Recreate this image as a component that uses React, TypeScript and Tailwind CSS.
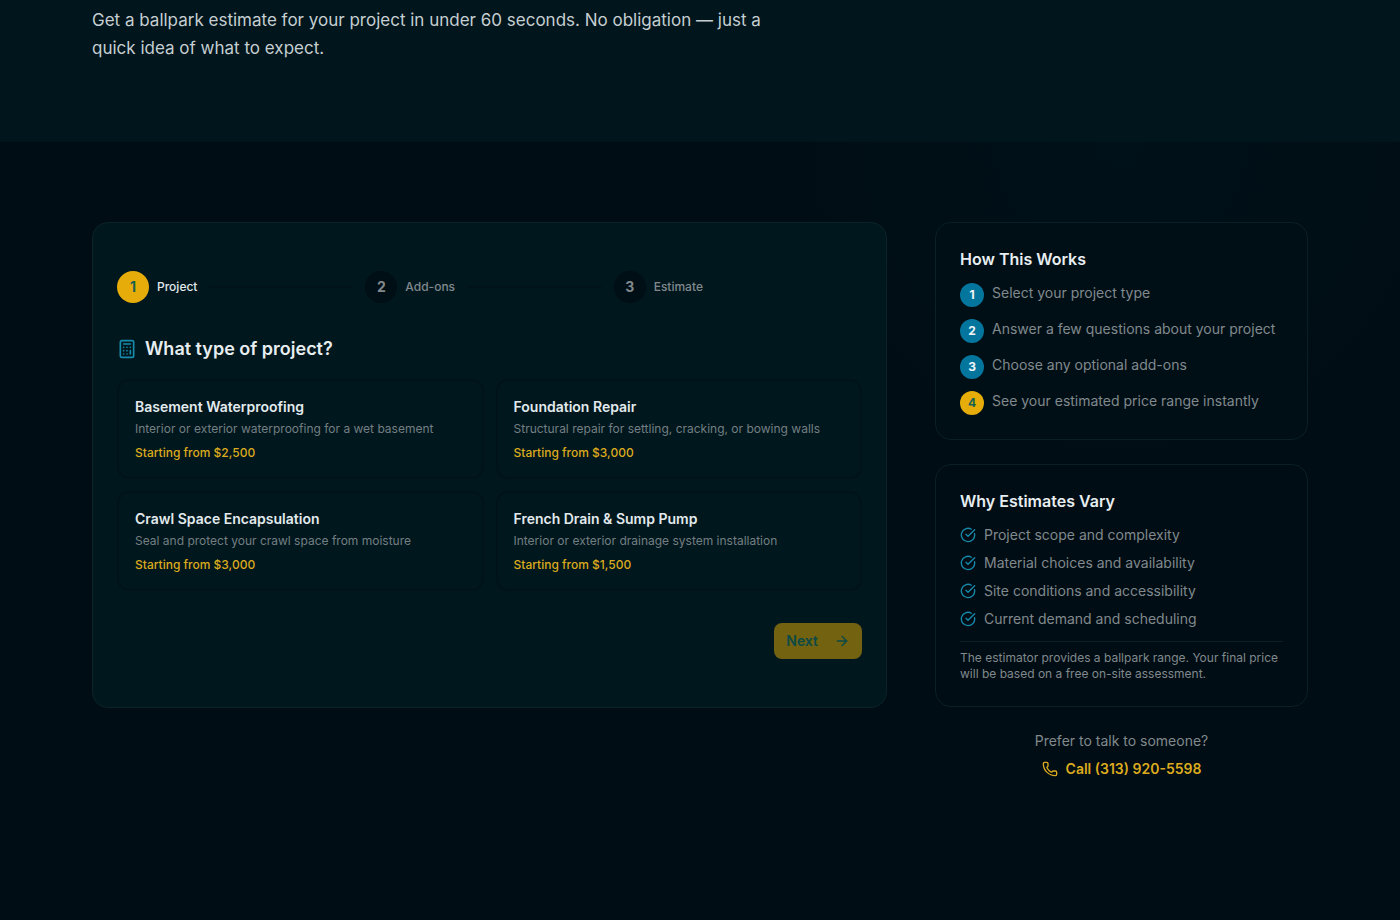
import { useState } from 'react';
import { ArrowRight, Calculator, CircleCheckBig, Phone } from 'lucide-react';
import clsx from 'clsx';

interface ProjectType {
  id: string;
  title: string;
  description: string;
  price: string;
}

const STEPS = ['Project', 'Add-ons', 'Estimate'];

const PROJECT_TYPES: ProjectType[] = [
  {
    id: 'basement',
    title: 'Basement Waterproofing',
    description: 'Interior or exterior waterproofing for a wet basement',
    price: '$2,500',
  },
  {
    id: 'foundation',
    title: 'Foundation Repair',
    description: 'Structural repair for settling, cracking, or bowing walls',
    price: '$3,000',
  },
  {
    id: 'crawl-space',
    title: 'Crawl Space Encapsulation',
    description: 'Seal and protect your crawl space from moisture',
    price: '$3,000',
  },
  {
    id: 'drainage',
    title: 'French Drain & Sump Pump',
    description: 'Interior or exterior drainage system installation',
    price: '$1,500',
  },
];

const HOW_IT_WORKS = [
  'Select your project type',
  'Answer a few questions about your project',
  'Choose any optional add-ons',
  'See your estimated price range instantly',
];

const VARIATIONS = [
  'Project scope and complexity',
  'Material choices and availability',
  'Site conditions and accessibility',
  'Current demand and scheduling',
];

function StepIndicator({ current }: { current: number }) {
  return (
    <ol className="flex items-center">
      {STEPS.map((label, index) => (
        <li key={label} className="flex flex-1 items-center">
          <span
            className={clsx(
              'flex h-8 w-8 shrink-0 items-center justify-center rounded-full text-sm font-bold',
              index === current ? 'bg-[#e5ac0a] text-[#17604e]' : 'bg-[#000e15] text-[#81898d]'
            )}
          >
            {index + 1}
          </span>
          <span
            className={clsx(
              'ml-2 text-xs font-medium',
              index === current ? 'text-[#e3eaed]' : 'text-[#81898d]'
            )}
          >
            {label}
          </span>
          {index < STEPS.length - 1 && <span className="mx-3 h-0.5 flex-1 bg-[#00131a]" />}
        </li>
      ))}
    </ol>
  );
}

function Estimator() {
  const [selected, setSelected] = useState<string | null>(null);

  return (
    <div className="rounded-2xl border border-[#0a2329] bg-[#00171d] px-6 py-12">
      <StepIndicator current={0} />

      <h2 className="mt-8 flex items-center gap-2 text-lg font-semibold text-[#e8eef0]">
        <Calculator className="h-5 w-5 text-[#168aab]" />
        What type of project?
      </h2>

      <div className="mt-4 grid gap-3 sm:grid-cols-2">
        {PROJECT_TYPES.map((project) => (
          <button
            key={project.id}
            type="button"
            aria-pressed={selected === project.id}
            onClick={() => setSelected(project.id)}
            className={clsx(
              'rounded-xl border-2 p-4 text-left',
              selected === project.id ? 'border-[#e5ac0a]' : 'border-[#00131a]'
            )}
          >
            <span className="block text-sm font-semibold text-[#e3eaed]">{project.title}</span>
            <span className="mt-1 block text-xs text-[#747f83]">{project.description}</span>
            <span className="mt-2 block text-xs font-medium text-[#dcab1e]">
              Starting from {project.price}
            </span>
          </button>
        ))}
      </div>

      <div className="mt-8 flex justify-end">
        <button
          type="button"
          disabled={!selected}
          className="flex h-9 items-center gap-4 rounded-lg bg-[#e5ac0a] px-3 text-sm font-semibold text-[#075a55] disabled:bg-[#736210] disabled:text-[#0b4a47]"
        >
          Next
          <ArrowRight className="h-4 w-4" />
        </button>
      </div>
    </div>
  );
}

function Sidebar() {
  return (
    <aside className="space-y-6">
      <section className="rounded-2xl border border-[#0a1f26] bg-[#000f16] p-6">
        <h3 className="font-semibold text-[#e8eef0]">How This Works</h3>
        <ol className="mt-3 space-y-3">
          {HOW_IT_WORKS.map((item, index) => (
            <li key={item} className="flex items-start gap-2 text-sm text-[#81898d]">
              <span
                className={clsx(
                  'flex h-6 w-6 shrink-0 items-center justify-center rounded-full text-xs font-bold',
                  index === HOW_IT_WORKS.length - 1
                    ? 'bg-[#e5ac0a] text-[#17604e]'
                    : 'bg-[#04769d] text-[#f1f7f9]'
                )}
              >
                {index + 1}
              </span>
              {item}
            </li>
          ))}
        </ol>
      </section>

      <section className="rounded-2xl border border-[#0a1f26] bg-[#000d14] p-6">
        <h3 className="font-semibold text-[#e8eef0]">Why Estimates Vary</h3>
        <ul className="mt-3 space-y-2">
          {VARIATIONS.map((item) => (
            <li key={item} className="flex items-center gap-2 text-sm text-[#81898d]">
              <CircleCheckBig className="h-4 w-4 shrink-0 text-[#168aab]" />
              {item}
            </li>
          ))}
        </ul>
        <p className="mt-3 border-t border-[#0a1f26] pt-2 text-xs text-[#81898d]">
          The estimator provides a ballpark range. Your final price will be based on a free on-site
          assessment.
        </p>
      </section>

      <div className="text-center text-sm">
        <p className="text-[#81898d]">Prefer to talk to someone?</p>
        <a
          href="tel:+13139205598"
          className="mt-2 inline-flex items-center gap-2 font-semibold text-[#dcab1e]"
        >
          <Phone className="h-4 w-4" />
          Call (313) 920-5598
        </a>
      </div>
    </aside>
  );
}

export default function App() {
  return (
    <div className="min-h-screen bg-[#000d14] font-['Inter',sans-serif]">
      <header className="bg-[#00151c] pt-1.5 pb-20">
        <div className="mx-auto max-w-7xl px-8">
          <p className="max-w-2xl text-[17px] leading-7 text-[#c6ced1]">
            Get a ballpark estimate for your project in under 60 seconds. No obligation — just a
            quick idea of what to expect.
          </p>
        </div>
      </header>

      <main className="bg-[radial-gradient(circle_320px_at_80%_0,#001119,#000d14)] py-20">
        <div className="mx-auto grid max-w-7xl items-start gap-12 px-8 lg:grid-cols-[minmax(0,1fr)_373px]">
          <Estimator />
          <Sidebar />
        </div>
      </main>
    </div>
  );
}
